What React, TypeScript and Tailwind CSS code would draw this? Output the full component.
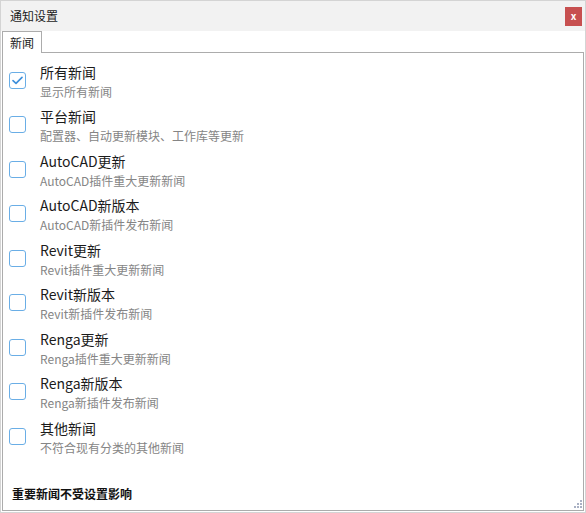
import { useState } from "react";

const items = [
  { title: "所有新闻", desc: "显示所有新闻", checked: true },
  { title: "平台新闻", desc: "配置器、自动更新模块、工作库等更新", checked: false },
  { title: "AutoCAD更新", desc: "AutoCAD插件重大更新新闻", checked: false },
  { title: "AutoCAD新版本", desc: "AutoCAD新插件发布新闻", checked: false },
  { title: "Revit更新", desc: "Revit插件重大更新新闻", checked: false },
  { title: "Revit新版本", desc: "Revit新插件发布新闻", checked: false },
  { title: "Renga更新", desc: "Renga插件重大更新新闻", checked: false },
  { title: "Renga新版本", desc: "Renga新插件发布新闻", checked: false },
  { title: "其他新闻", desc: "不符合现有分类的其他新闻", checked: false },
];

function CheckBox({ checked, onClick }: { checked: boolean; onClick: () => void }) {
  return (
    <button
      type="button"
      onClick={onClick}
      className="flex h-[17px] w-[17px] shrink-0 items-center justify-center rounded-[3px] border border-[#6aaee6] bg-white"
    >
      {checked ? (
        <svg width="11" height="9" viewBox="0 0 11 9" fill="none">
          <path d="M1 4.6 L4 7.4 L10 1.4" stroke="#3d8fdb" strokeWidth="1.6" strokeLinecap="round" strokeLinejoin="round" />
        </svg>
      ) : null}
    </button>
  );
}

export default function App() {
  const [state, setState] = useState(items.map((i) => i.checked));

  return (
    <div
      className="relative flex h-[513px] w-[586px] flex-col border border-[#d4d4d4] bg-white"
      style={{ fontFamily: '"Noto Sans CJK SC", "Noto Sans", sans-serif' }}
    >
      <div className="flex h-[30px] shrink-0 items-center justify-between bg-[#f2f2f2] pl-[9px] pr-[3px]">
        <span className="pb-[1px] text-[12px] leading-none text-[#1b1b1b]">通知设置</span>
        <button
          type="button"
          className="flex h-[19px] w-[17px] items-center justify-center bg-[#c75050] text-[10px] font-bold leading-none text-white"
        >
          x
        </button>
      </div>

      <div className="flex h-[22px] shrink-0 items-stretch pl-[1px] pr-[1px]">
        <div className="flex items-center border-l border-r border-t border-[#acacac] px-[7px] text-[12px] leading-none text-[#1b1b1b]">
          新闻
        </div>
        <div className="flex-1 border-b border-[#acacac]" />
      </div>

      <div className="mx-[1px] mb-[1px] flex flex-1 flex-col border-b border-l border-r border-[#acacac] pt-[5px]">
        {items.map((item, i) => (
          <div key={item.title} className="flex h-[44.5px] items-center gap-[14px] pl-[6px]">
            <CheckBox
              checked={state[i]}
              onClick={() => setState((s) => s.map((v, j) => (j === i ? !v : v)))}
            />
            <div className="flex flex-col pt-[2px]">
              <span className="text-[14px] leading-[20px] text-[#1b1b1b]">{item.title}</span>
              <span className="text-[12px] leading-[19px] text-[#858585]">{item.desc}</span>
            </div>
          </div>
        ))}

        <div className="mt-auto pb-[8px] pl-[9px] text-[12px] font-bold leading-[17px] text-[#111]">
          重要新闻不受设置影响
        </div>
      </div>

      <svg className="absolute bottom-[3px] right-[3px]" width="10" height="10" viewBox="0 0 10 10">
        {[
          [8, 0],
          [8, 3],
          [5, 3],
          [8, 6],
          [5, 6],
          [2, 6],
        ].map(([x, y]) => (
          <rect key={`${x}-${y}`} x={x} y={y + 1} width="2" height="2" fill="#a9b1c4" />
        ))}
      </svg>
    </div>
  );
}
